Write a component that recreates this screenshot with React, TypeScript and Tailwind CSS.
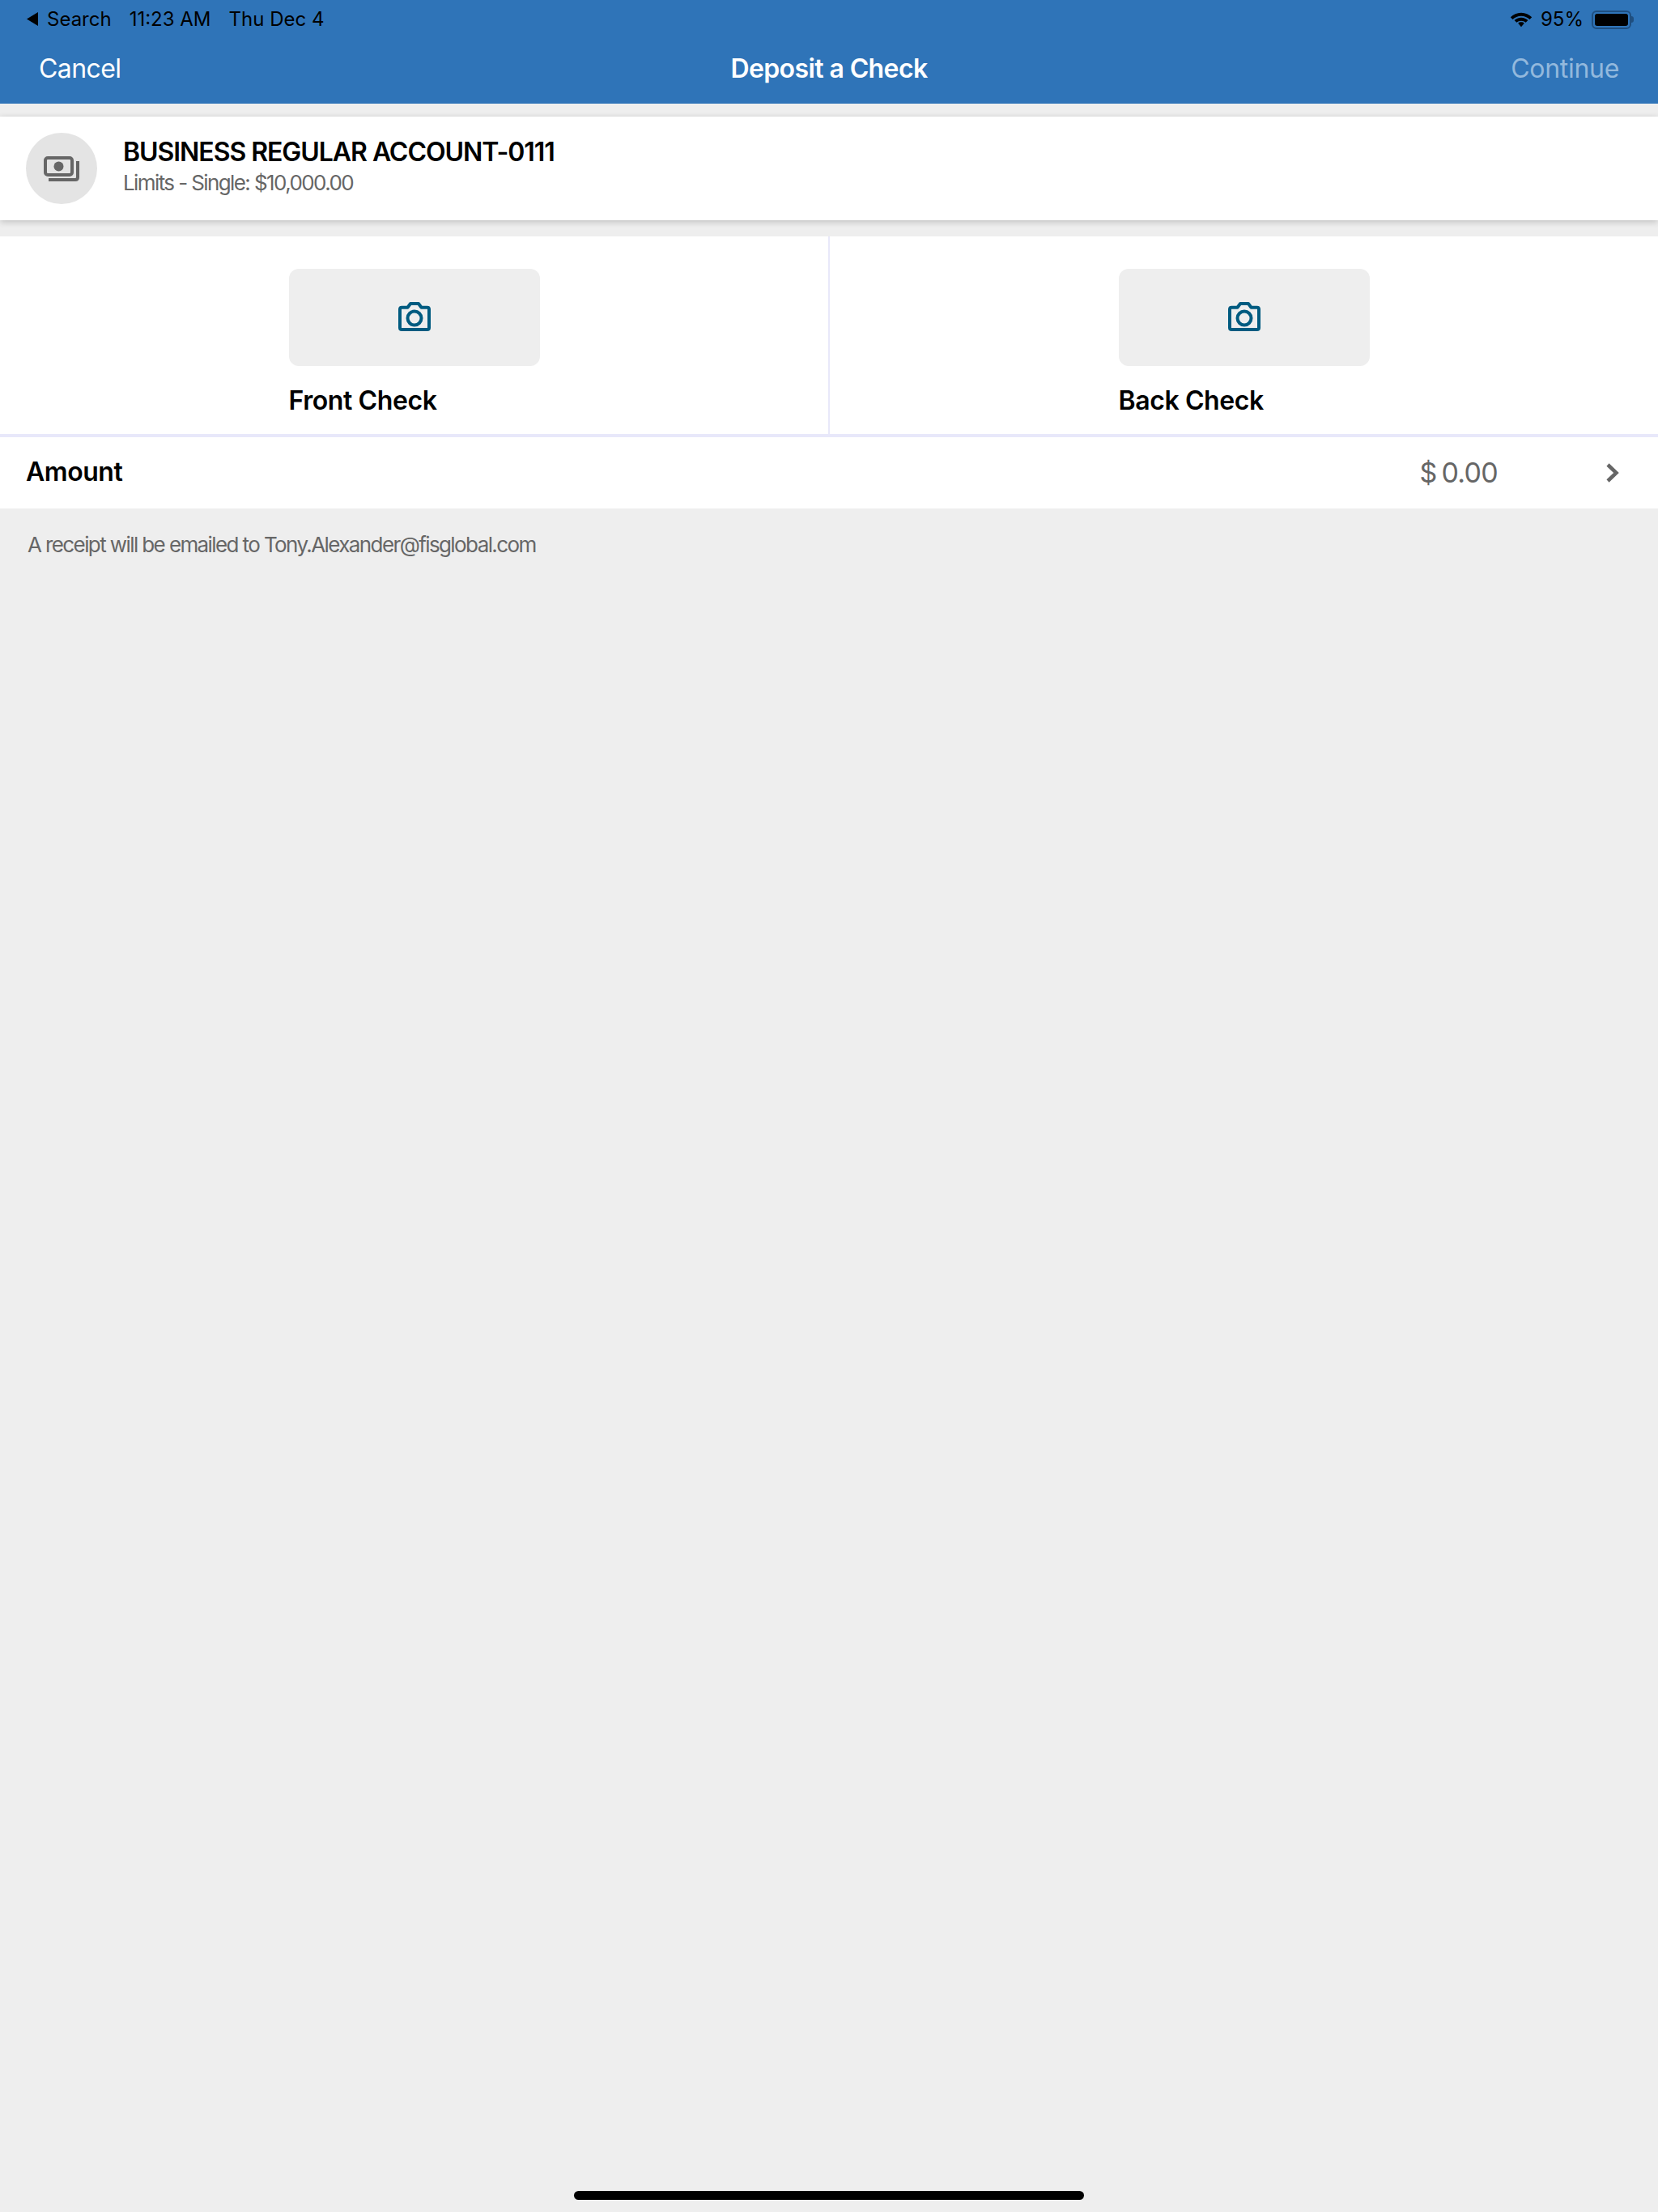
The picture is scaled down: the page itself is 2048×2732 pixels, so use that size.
import React from "react";

const font = "font-['Inter','Liberation_Sans',sans-serif]";

function Wifi() {
  return (
    <svg width="28" height="21" viewBox="0 2.500 28 17.500" fill="#000">
      <path d="M14 2.500C8.800 2.500 4.200 4.600.8 7.900L3.500 10.800C6.200 8.200 9.900 6.500 14 6.500s7.800 1.700 10.500 4.300l2.700-2.900C23.800 4.600 19.200 2.500 14 2.500z" />
      <path d="M14 8.400c-3.300 0-6.200 1.300-8.400 3.300l2.700 2.900c1.500-1.300 3.500-2.200 5.700-2.200s4.200.900 5.700 2.200l2.700-2.900c-2.200-2-5.100-3.300-8.400-3.300z" />
      <path d="M14 14.100c-1.500 0-2.800.500-3.800 1.400L14 20l3.800-4.500c-1-.900-2.300-1.400-3.800-1.400z" />
    </svg>
  );
}

function Battery() {
  return (
    <div className="flex items-center">
      <div className="w-[49px] h-[23px] rounded-[6px] border-2 border-[#1f4f80] p-[2px]">
        <div className="w-full h-full rounded-[3px] bg-black" />
      </div>
      <div className="w-[3px] h-[8px] rounded-r-[3px] bg-[#1f4f80]" />
    </div>
  );
}

function MoneyIcon() {
  return (
    <svg width="44" height="31" viewBox="0 0 44 31" fill="none" stroke="#666666" strokeWidth="4">
      <rect x="2" y="2" width="33" height="21" rx="3" />
      <circle cx="18.500" cy="12.500" r="6" fill="#666666" stroke="none" />
      <path d="M42 6V26c0 1.800-1 3-3 3H6" />
    </svg>
  );
}

function CameraIcon() {
  return (
    <svg width="40" height="36" viewBox="0 0 40 36" fill="none" stroke="#005b80" strokeWidth="4" strokeLinejoin="round" className="mb-[2px]">
      <path d="M2 9c0-1.400 1-2.300 2.300-2.300h7.200L15 2h10l3.500 4.700h7.200C37 6.700 38 7.600 38 9v22.700c0 1.300-1 2.300-2.300 2.300H4.300C3 34 2 33 2 31.700z" />
      <circle cx="20" cy="20" r="8.500" />
    </svg>
  );
}

function CheckSide({ label, divided }: { label: string; divided?: boolean }) {
  return (
    <div className={`flex-1 flex justify-center ${divided ? "border-r-2 border-[#e8e8fa]" : ""}`}>
      <div className="w-[310px] pt-[40px]">
        <div className="h-[120px] rounded-[12px] bg-[#eeeeee] flex items-center justify-center">
          <CameraIcon />
        </div>
        <div className="mt-[19px] text-[32px] leading-[48px] font-semibold tracking-[-0.4px] text-black">{label}</div>
      </div>
    </div>
  );
}

export default function App() {
  return (
    <div className={`${font} relative w-[2048px] h-[2732px] bg-[#eeeeee] flex flex-col overflow-hidden`}>
      <header className="h-[128px] bg-[#2f74b8] shrink-0 flex flex-col">
        <div className="h-[48px] pl-[32px] pr-[30px] flex items-center justify-between text-black text-[24px]">
          <div className="flex items-center">
            <svg width="16" height="20" viewBox="0 0 16 20" fill="#000" className="mr-[10px]">
              <path d="M15 1v17L1 9.500z" />
            </svg>
            <span>Search</span>
            <span className="ml-[22px]">11:23 AM</span>
            <span className="ml-[22px]">Thu Dec 4</span>
          </div>
          <div className="flex items-center gap-[10px]">
            <Wifi />
            <span>95%</span>
            <Battery />
          </div>
        </div>
        <div className="flex-1 grid grid-cols-3 items-center px-[48px] pb-[6px] text-[32px]">
          <span className="text-white tracking-[-0.6px] justify-self-start">Cancel</span>
          <span className="text-white font-semibold tracking-[-0.6px] justify-self-center">Deposit a Check</span>
          <span className="text-[#93b9dd] tracking-[-0.3px] justify-self-end">Continue</span>
        </div>
      </header>

      <section className="mt-[16px] h-[128px] bg-white flex items-center pl-[32px] shadow-[0_2px_8px_rgba(0,0,0,0.2)] relative">
        <div className="w-[88px] h-[88px] rounded-full bg-[#e4e4e4] flex items-center justify-center">
          <MoneyIcon />
        </div>
        <div className="ml-[32px] flex flex-col pb-[8px]">
          <div className="text-[32px] leading-[44px] font-semibold tracking-[-1.05px] text-black">BUSINESS REGULAR ACCOUNT-0111</div>
          <div className="text-[26px] leading-[32px] tracking-[-1.6px] text-[#666666]">Limits - Single: $10,000.00</div>
        </div>
      </section>

      <section className="mt-[20px] h-[248px] bg-white flex border-b-4 border-[#e8e8fa]">
        <CheckSide label="Front Check" divided />
        <CheckSide label="Back Check" />
      </section>

      <section className="h-[88px] bg-white flex items-center justify-between pl-[32px] pr-[48px] pb-[2px]">
        <span className="text-[32px] font-semibold tracking-[-0.45px] text-black">Amount</span>
        <div className="flex items-center">
          <span className="text-[34px] text-[#666666] tracking-[-0.7px] [word-spacing:-3px]">$ 0.00</span>
          <svg width="16" height="24" viewBox="0 0 16 24" fill="none" stroke="#666666" strokeWidth="4.500" className="ml-[134px] mt-[2px]">
            <path d="M2 2L12.500 12 2 22" />
          </svg>
        </div>
      </section>

      <p className="mt-[28px] ml-[34px] text-[26px] leading-[34px] tracking-[-1.6px] text-[#666666]">
        A receipt will be emailed to Tony.Alexander@fisglobal.com
      </p>

      <div className="absolute left-[709px] top-[2706px] w-[630px] h-[11px] rounded-full bg-black" />
    </div>
  );
}
